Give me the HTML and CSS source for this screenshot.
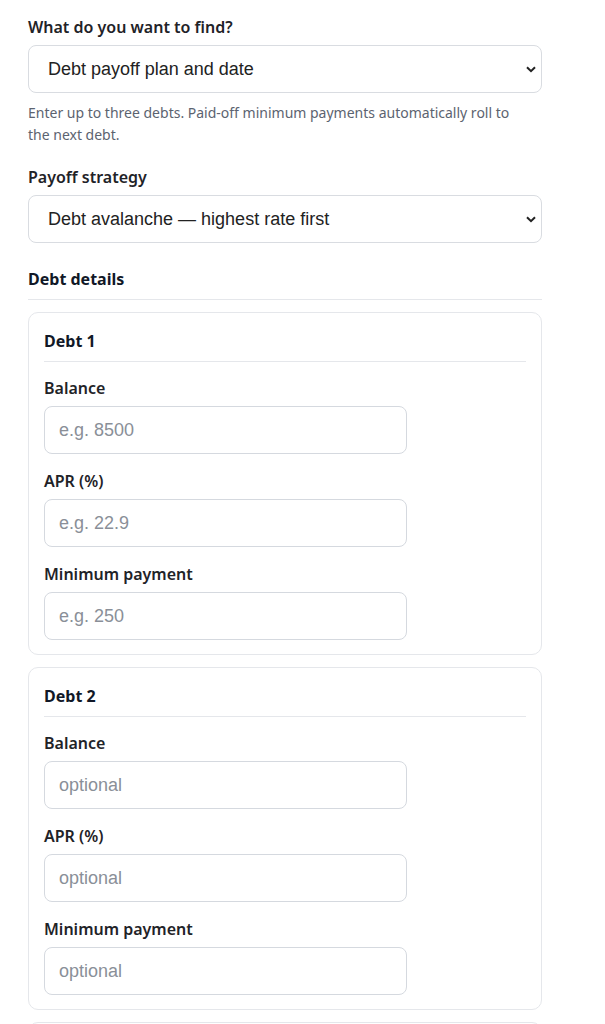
FILE: index.html
```html
<!DOCTYPE html>
<html lang="en">
<head>
    <meta charset="UTF-8">
    <meta name="viewport" content="width=device-width, initial-scale=1.0">
    <title>Debt Payoff Calculator</title>
    <link rel="stylesheet" href="styles.css">
</head>
<body>

<form class="calc">
    <div class="field">
        <label for="goal">What do you want to find?</label>
        <div class="select-wrap">
            <select id="goal">
                <option>Debt payoff plan and date</option>
            </select>
            <svg class="chevron" width="10" height="7" viewBox="0 0 10 7"><path d="M1 1.2 5 5.2 9 1.2" fill="none" stroke="#222" stroke-width="2"/></svg>
        </div>
        <p class="help">Enter up to three debts. Paid-off minimum payments automatically roll to the next debt.</p>
    </div>

    <div class="field">
        <label for="strategy">Payoff strategy</label>
        <div class="select-wrap">
            <select id="strategy">
                <option>Debt avalanche — highest rate first</option>
            </select>
            <svg class="chevron" width="10" height="7" viewBox="0 0 10 7"><path d="M1 1.2 5 5.2 9 1.2" fill="none" stroke="#222" stroke-width="2"/></svg>
        </div>
    </div>

    <h3 class="section-title">Debt details</h3>

    <fieldset class="debt">
        <h4>Debt 1</h4>
        <label for="bal1">Balance</label>
        <input type="text" id="bal1" placeholder="e.g. 8500">
        <label for="apr1">APR (%)</label>
        <input type="text" id="apr1" placeholder="e.g. 22.9">
        <label for="min1">Minimum payment</label>
        <input type="text" id="min1" placeholder="e.g. 250">
    </fieldset>

    <fieldset class="debt">
        <h4>Debt 2</h4>
        <label for="bal2">Balance</label>
        <input type="text" id="bal2" placeholder="optional">
        <label for="apr2">APR (%)</label>
        <input type="text" id="apr2" placeholder="optional">
        <label for="min2">Minimum payment</label>
        <input type="text" id="min2" placeholder="optional">
    </fieldset>

    <fieldset class="debt">
        <h4>Debt 3</h4>
        <label for="bal3">Balance</label>
        <input type="text" id="bal3" placeholder="optional">
        <label for="apr3">APR (%)</label>
        <input type="text" id="apr3" placeholder="optional">
        <label for="min3">Minimum payment</label>
        <input type="text" id="min3" placeholder="optional">
    </fieldset>
</form>

</body>
</html>
```

FILE: styles.css
```css
body {
    margin: 0;
    background-color: #fff;
    font-family: "Noto Sans", "Open Sans", sans-serif;
    color: #1f2328;
}

.calc {
    width: 514px;
    padding: 16px 0 0 28px;
}

label {
    display: block;
    font-size: 16px;
    font-weight: 600;
    line-height: 22px;
    margin-bottom: 7px;
}

.field {
    margin-bottom: 25px;
}

.field + .field {
    margin-top: -5px;
}

.select-wrap {
    position: relative;
}

select {
    -webkit-appearance: none;
    appearance: none;
    width: 100%;
    height: 48px;
    padding: 0 30px 0 19px;
    font-family: "Liberation Sans", Arial, sans-serif;
    font-size: 18px;
    color: #222;
    background-color: #fff;
    border: 1px solid #d9dce1;
    border-radius: 8px;
}

.chevron {
    position: absolute;
    right: 6px;
    top: 21px;
}

.help {
    max-width: 498px;
    margin: 9px 0 0;
    font-size: 14px;
    line-height: 22px;
    color: #5c6370;
}

.section-title {
    margin: 0 0 12px;
    padding-bottom: 9px;
    font-size: 16px;
    font-weight: 700;
    line-height: 22px;
    color: #111827;
    border-bottom: 1px solid #e5e7eb;
}

.debt {
    margin: 0 0 12px;
    padding: 17px 15px 14px;
    border: 1px solid #e5e7eb;
    border-radius: 10px;
}

.debt h4 {
    margin: 0 0 15px;
    padding-bottom: 9px;
    font-size: 16px;
    font-weight: 700;
    line-height: 22px;
    color: #111827;
    border-bottom: 1px solid #e5e7eb;
}

.debt input {
    display: block;
    box-sizing: border-box;
    width: 363px;
    height: 48px;
    margin: 0 0 16px;
    padding: 0 14px;
    font-family: "Liberation Sans", Arial, sans-serif;
    font-size: 18px;
    color: #222;
    border: 1px solid #d5d9df;
    border-radius: 8px;
}

.debt input:last-child {
    margin-bottom: 0;
}

.debt input::placeholder {
    color: #8a8f98;
}
```
